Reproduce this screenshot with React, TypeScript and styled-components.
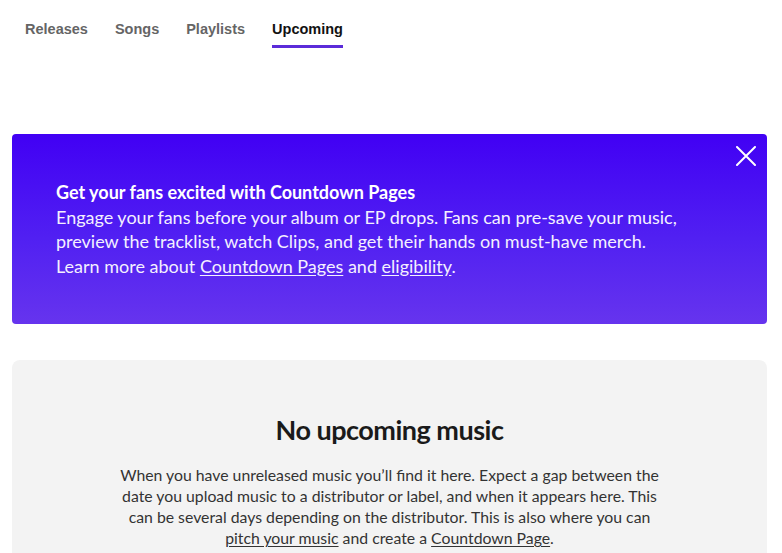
import React from 'react';
import styled, { createGlobalStyle } from 'styled-components';

const GlobalStyle = createGlobalStyle`
  body {
    margin: 0;
    background: #fff;
    font-family: 'Lato', 'Liberation Sans', sans-serif;
    overflow: hidden;
  }
`;

const tabs = ['Releases', 'Songs', 'Playlists', 'Upcoming'];

const App: React.FC = () => {
  return (
    <>
      <GlobalStyle />
      <Page>
        <TabBar>
          {tabs.map((t) => (
            <Tab key={t} active={t === 'Upcoming'}>
              {t}
            </Tab>
          ))}
        </TabBar>

        <Banner>
          <BannerText>
            <BannerTitle>Get your fans excited with Countdown Pages</BannerTitle>
            Engage your fans before your album or EP drops. Fans can pre-save your music,
            <br />
            preview the tracklist, watch Clips, and get their hands on must-have merch.
            <br />
            Learn more about <BannerLink>Countdown Pages</BannerLink> and{' '}
            <BannerLink>eligibility</BannerLink>.
          </BannerText>
          <CloseButton aria-label="Close">
            <svg width="20" height="20" viewBox="0 0 20 20">
              <path d="M1 1 L19 19 M19 1 L1 19" stroke="#fff" strokeWidth="2" strokeLinecap="round" />
            </svg>
          </CloseButton>
        </Banner>

        <EmptyCard>
          <EmptyTitle>No upcoming music</EmptyTitle>
          <EmptyText>
            When you have unreleased music you’ll find it here. Expect a gap between the
            <br />
            date you upload music to a distributor or label, and when it appears here. This
            <br />
            can be several days depending on the distributor. This is also where you can
            <br />
            <DarkLink>pitch your music</DarkLink> and create a <DarkLink>Countdown Page</DarkLink>.
          </EmptyText>
        </EmptyCard>
      </Page>
    </>
  );
};

export default App;

const purple = '#5b2bd9';

const Page = styled.div`
  padding: 0 15px 0 12px;
`;

const TabBar = styled.nav`
  display: flex;
  gap: 27px;
  padding: 19px 0 0 13px;
  height: 116px;
  box-sizing: border-box;
`;

const Tab = styled.div<{ active?: boolean }>`
  font-family: 'Liberation Sans', Arial, sans-serif;
  font-weight: bold;
  font-size: 14.5px;
  line-height: 20px;
  color: ${(p) => (p.active ? '#121212' : '#656565')};
  height: 29px;
  box-sizing: border-box;
  border-bottom: 3px solid ${(p) => (p.active ? purple : 'transparent')};
`;

const Banner = styled.section`
  position: relative;
  display: flex;
  align-items: center;
  height: 190px;
  margin-top: 18px;
  padding: 0 44px;
  border-radius: 4px;
  background: linear-gradient(180deg, #4100f4 0%, #5120f2 55%, #6634ee 100%);
  color: #fff;
`;

const BannerText = styled.div`
  font-size: 18px;
  line-height: 24.5px;
  color: #f4f0ff;
`;

const BannerTitle = styled.div`
  font-weight: 700;
  color: #fff;
`;

const BannerLink = styled.a`
  color: inherit;
  text-decoration: underline;
  text-underline-offset: 2px;
`;

const CloseButton = styled.button`
  position: absolute;
  top: 9px;
  right: 8px;
  width: 26px;
  height: 26px;
  padding: 0;
  border: 0;
  background: none;
  display: flex;
  align-items: center;
  justify-content: center;
`;

const EmptyCard = styled.section`
  margin-top: 36px;
  background: #f3f3f3;
  border-radius: 8px;
  padding: 52px 20px 40px;
  text-align: center;
  min-height: 240px;
`;

const EmptyTitle = styled.h2`
  margin: 0 0 16px;
  font-size: 27px;
  line-height: 36px;
  font-weight: 700;
  color: #1a1a1a;
  letter-spacing: -0.5px;
`;

const EmptyText = styled.p`
  margin: 0;
  font-size: 15.8px;
  line-height: 21px;
  color: #333;
`;

const DarkLink = styled.a`
  color: inherit;
  text-decoration: underline;
  text-underline-offset: 2px;
`;
